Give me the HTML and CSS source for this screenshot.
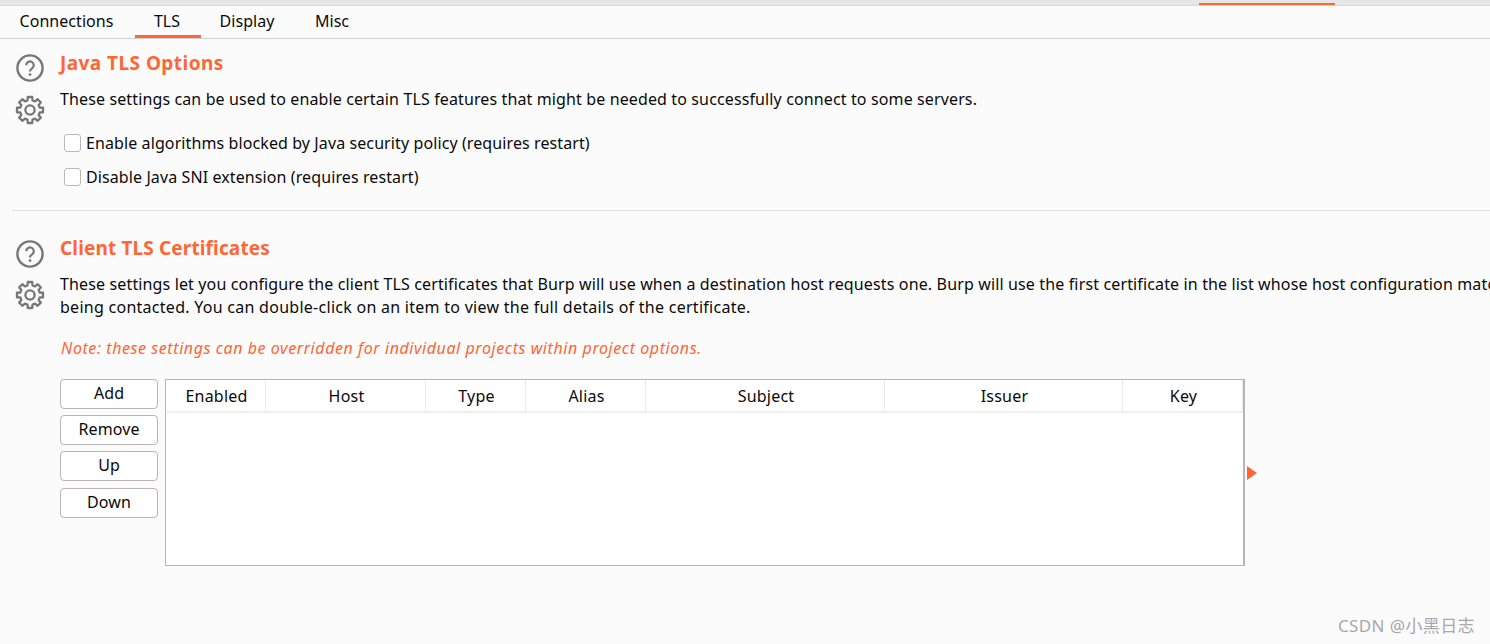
FILE: index.html
```
<!DOCTYPE html>
<html lang="en">
<head>
<meta charset="utf-8">
<title>TLS settings</title>
<link rel="stylesheet" href="styles.css">
</head>
<body>
<div class="topbar"><div class="topbar-active"></div></div>
<nav class="tabs">
  <div class="tab tab-connections">Connections</div>
  <div class="tab tab-tls active">TLS</div>
  <div class="tab tab-display">Display</div>
  <div class="tab tab-misc">Misc</div>
</nav>
<main>
  <section class="section section-java">
    <div class="icons">
      <svg class="icon" viewBox="0 0 30 30"><circle cx="15" cy="15" r="12.6" fill="none" stroke="#777" stroke-width="2.4"/><path d="M11.2 12.2a3.8 3.8 0 1 1 5.9 3.2c-1.4.8-2.1 1.5-2.1 3.1" fill="none" stroke="#777" stroke-width="2.2"/><circle cx="15" cy="21.6" r="1.4" fill="#777"/></svg>
      <svg class="icon gear" viewBox="0 0 30 30"><path d="M12.74 2H17.26L17.5 5.32 20.08 6.39 22.6 4.2 25.8 7.4 23.61 9.92 24.68 12.5 28 12.74V17.26L24.68 17.5 23.61 20.08 25.8 22.6 22.6 25.8 20.08 23.61 17.5 24.68 17.26 28H12.74L12.5 24.68 9.92 23.61 7.4 25.8 4.2 22.6 6.39 20.08 5.32 17.5 2 17.26V12.74L5.32 12.5 6.39 9.92 4.2 7.4 7.4 4.2 9.92 6.39 12.5 5.32Z" fill="none" stroke="#777" stroke-width="2.3" stroke-linejoin="round"/><circle cx="15" cy="15" r="4.6" fill="none" stroke="#777" stroke-width="2.3"/></svg>
    </div>
    <div class="content">
      <h2>Java TLS Options</h2>
      <p class="desc">These settings can be used to enable certain TLS features that might be needed to successfully connect to some servers.</p>
      <label class="check"><span class="box"></span>Enable algorithms blocked by Java security policy (requires restart)</label>
      <label class="check"><span class="box"></span>Disable Java SNI extension (requires restart)</label>
    </div>
  </section>
  <hr class="divider">
  <section class="section section-client">
    <div class="icons">
      <svg class="icon" viewBox="0 0 30 30"><circle cx="15" cy="15" r="12.6" fill="none" stroke="#777" stroke-width="2.4"/><path d="M11.2 12.2a3.8 3.8 0 1 1 5.9 3.2c-1.4.8-2.1 1.5-2.1 3.1" fill="none" stroke="#777" stroke-width="2.2"/><circle cx="15" cy="21.6" r="1.4" fill="#777"/></svg>
      <svg class="icon gear" viewBox="0 0 30 30"><path d="M12.74 2H17.26L17.5 5.32 20.08 6.39 22.6 4.2 25.8 7.4 23.61 9.92 24.68 12.5 28 12.74V17.26L24.68 17.5 23.61 20.08 25.8 22.6 22.6 25.8 20.08 23.61 17.5 24.68 17.26 28H12.74L12.5 24.68 9.92 23.61 7.4 25.8 4.2 22.6 6.39 20.08 5.32 17.5 2 17.26V12.74L5.32 12.5 6.39 9.92 4.2 7.4 7.4 4.2 9.92 6.39 12.5 5.32Z" fill="none" stroke="#777" stroke-width="2.3" stroke-linejoin="round"/><circle cx="15" cy="15" r="4.6" fill="none" stroke="#777" stroke-width="2.3"/></svg>
    </div>
    <div class="content">
      <h2>Client TLS Certificates</h2>
      <p class="desc"><span class="line-one">These settings let you configure the client TLS certificates that Burp will use when a destination host requests one. Burp will use the first certificate in the list whose host configuration matches the host</span><br><span class="line-two">being contacted. You can double-click on an item to view the full details of the certificate.</span></p>
      <p class="note">Note: these settings can be overridden for individual projects within project options.</p>
      <div class="table-row">
        <div class="buttons">
          <button class="btn">Add</button>
          <button class="btn">Remove</button>
          <button class="btn">Up</button>
          <button class="btn">Down</button>
        </div>
        <div class="table">
          <div class="thead">
            <div class="th">Enabled</div>
            <div class="th">Host</div>
            <div class="th">Type</div>
            <div class="th">Alias</div>
            <div class="th">Subject</div>
            <div class="th">Issuer</div>
            <div class="th">Key</div>
          </div>
        </div>
        <div class="arrow"></div>
      </div>
    </div>
  </section>
</main>
<div class="watermark">CSDN @小黑日志</div>
</body>
</html>
```
FILE: styles.css
```
* { box-sizing: border-box; }
html, body { margin: 0; height: 100%; overflow: hidden; }
body {
  position: relative;
  background: #fbfbfb;
  color: #0a0a0a;
  font-family: "Noto Sans", "Noto Sans CJK SC", sans-serif;
  font-size: 16px;
  width: 1490px;
  height: 644px;
}
.topbar {
  height: 6px;
  background: #e6e6e6;
  border-bottom: 1px solid #d9d9d9;
  padding: 3px 0 0 1199px;
}
.topbar-active { width: 136px; height: 2px; background: #ff6633; }
.tabs {
  display: flex;
  height: 33px;
  border-bottom: 1px solid #ced3d1;
  padding-left: 18px;
}
.tab { line-height: 30px; height: 32px; text-align: center; letter-spacing: .05px; }
.tab-connections { width: 97px; }
.tab-tls { width: 66px; margin-left: 20px; padding-right: 2px; }
.tab-display { width: 56px; margin-left: 18px; }
.tab-misc { width: 36px; margin-left: 39px; }
.tab.active { border-bottom: 3px solid #ff6633; }
.section { display: flex; }
.section-java { height: 171px; padding: 12px 0 0 15px; }
.section-client { padding: 25px 0 0 15px; }
.section-java .icons { padding-top: 2px; }
.section-client .icons { padding-top: 3px; }
.section-client .gear { margin-top: 11px; }
.icons { width: 45px; display: flex; flex-direction: column; }
.icon { width: 30px; height: 30px; display: block; }
.gear { margin-top: 12px; }
.content { flex: 1; min-width: 0; }
h2 {
  margin: 0;
  font-size: 19px;
  line-height: 24px;
  font-weight: 700;
  color: #ff6633;
}
.section-java h2 { letter-spacing: .45px; }
.section-client h2 { letter-spacing: .14px; }
.desc { margin: 13px 0 0; line-height: 23px; white-space: nowrap; letter-spacing: .125px; }
.line-one { letter-spacing: .14px; }
.line-two { letter-spacing: .27px; }
.check { display: flex; align-items: center; height: 34px; margin-left: 4px; white-space: nowrap; letter-spacing: .1px; }
.section-java .desc + .check { margin-top: 15px; }
.box {
  width: 17px; height: 18px; margin-right: 5px;
  background: #fff;
  border: 1px solid #b9b9b9;
  border-radius: 3px;
}
.divider { margin: 0 0 0 12px; border: 0; border-top: 1px solid #e1e1e1; height: 1px; }
.note { margin: 18px 0 0 1px; line-height: 23px; font-style: italic; color: #ff6633; white-space: nowrap; letter-spacing: .57px; }
.table-row { display: flex; align-items: flex-start; margin-top: 19px; }
.buttons { width: 98px; display: flex; flex-direction: column; gap: 6.2px; margin-right: 7px; }
.btn {
  height: 30px; padding: 0 0 2px;
  background: #fff;
  border: 1px solid #bbb4b4;
  border-radius: 4px;
  font: inherit;
  color: #0a0a0a;
  letter-spacing: .1px;
}
.table {
  width: 1080px; height: 187px;
  background: #fff;
  border: 1px solid #b5b5b5;
  border-right-width: 2px;
}
.thead {
  display: grid;
  grid-template-columns: 100px 160px 100px 120px 239px 238px 120px;
  height: 33px;
  border-bottom: 2px solid #efefef;
}
.th { text-align: center; line-height: 32px; border-right: 1px solid #ececec; letter-spacing: .2px; padding-left: 2px; }
.arrow {
  margin: 87px 0 0 2px;
  width: 0; height: 0;
  border-left: 10px solid #ff6633;
  border-top: 7px solid transparent;
  border-bottom: 7px solid transparent;
}
.watermark {
  position: absolute;
  right: 15px; top: 614px;
  font-size: 17px;
  line-height: 24px;
  color: #a8a8a8;
  white-space: nowrap;
  letter-spacing: .4px;
}
```
